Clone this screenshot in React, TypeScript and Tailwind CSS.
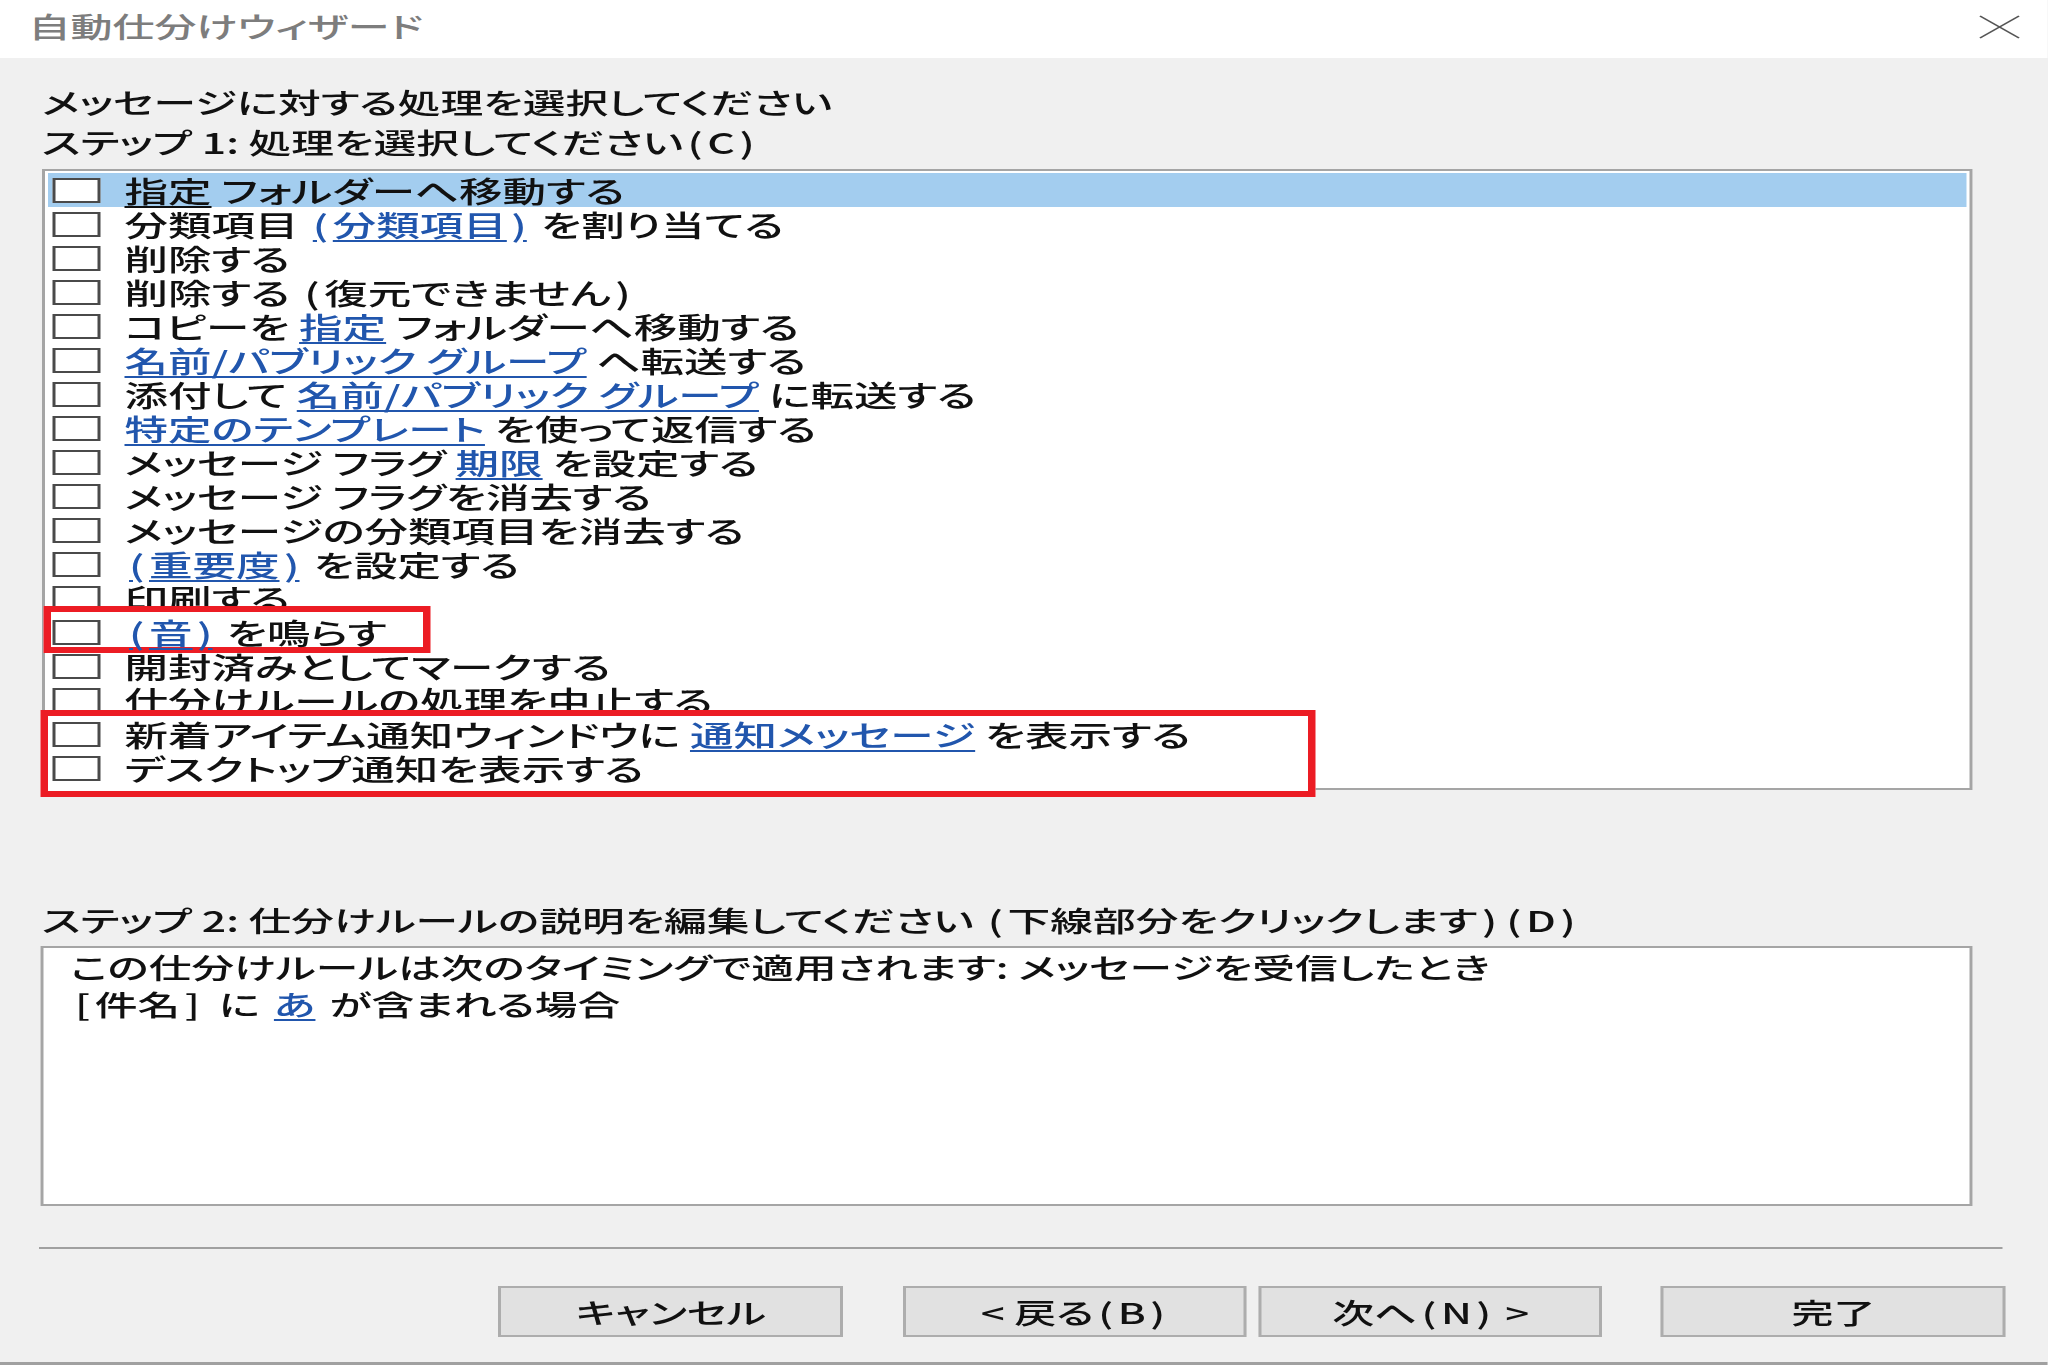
import React from "react";

type Seg = { t: string; link?: boolean };

const rows: Seg[][] = [
  [{ t: "指定", link: true }, { t: " フォルダーへ移動する" }],
  [{ t: "分類項目 " }, { t: "(分類項目)", link: true }, { t: " を割り当てる" }],
  [{ t: "削除する" }],
  [{ t: "削除する (復元できません)" }],
  [{ t: "コピーを " }, { t: "指定", link: true }, { t: " フォルダーへ移動する" }],
  [{ t: "名前/パブリック グループ", link: true }, { t: " へ転送する" }],
  [{ t: "添付して " }, { t: "名前/パブリック グループ", link: true }, { t: " に転送する" }],
  [{ t: "特定のテンプレート", link: true }, { t: " を使って返信する" }],
  [{ t: "メッセージ フラグ " }, { t: "期限", link: true }, { t: " を設定する" }],
  [{ t: "メッセージ フラグを消去する" }],
  [{ t: "メッセージの分類項目を消去する" }],
  [{ t: "(重要度)", link: true }, { t: " を設定する" }],
  [{ t: "印刷する" }],
  [{ t: "(音)", link: true }, { t: " を鳴らす" }],
  [{ t: "開封済みとしてマークする" }],
  [{ t: "仕分けルールの処理を中止する" }],
  [{ t: "新着アイテム通知ウィンドウに " }, { t: "通知メッセージ", link: true }, { t: " を表示する" }],
  [{ t: "デスクトップ通知を表示する" }],
];

// Widen the half-width brackets the way the original UI font draws them.
function W({ s }: { s: string }) {
  const parts = s.split(/([()\[\]])/);
  return (
    <>
      {parts.map((p, i) =>
        /^[()\[\]]$/.test(p) ? (
          <span key={i} className="px-[3px]">
            {p}
          </span>
        ) : (
          <React.Fragment key={i}>{p}</React.Fragment>
        )
      )}
    </>
  );
}

function Row({ segs, selected, raised }: { segs: Seg[]; selected?: boolean; raised?: boolean }) {
  return (
    <div
      className={`flex h-[34px] items-center ${selected ? "bg-[#a3cdef]" : ""} ${raised ? "relative z-10" : ""}`}
    >
      <span className="ml-[3px] h-[25px] w-[32px] shrink-0 border-2 border-[#4a4a4a] bg-white" />
      <span className="ml-[16px] whitespace-pre text-[#111111]">
        {segs.map((s, i) =>
          s.link ? (
            <span
              key={i}
              className={`underline underline-offset-[3px] ${selected ? "text-[#111111]" : "text-[#2156ad]"}`}
            >
              <W s={s.t} />
            </span>
          ) : (
            <span key={i}>
              <W s={s.t} />
            </span>
          )
        )}
      </span>
    </div>
  );
}

export default function App() {
  return (
    <div className="h-[1365px] w-[2048px] overflow-hidden bg-[#f0f0f0]">
      <div className="flex h-[1365px] w-[1365.33px] origin-top-left scale-x-150 flex-col font-['Noto_Sans_CJK_JP','Noto_Sans',sans-serif] font-medium text-[#111111] [font-feature-settings:'palt']">
        {/* Title bar */}
        <div className="flex h-[58px] shrink-0 items-center justify-between bg-white pl-[19px] pr-[18px]">
          <span className="-mt-[7px] text-[28px] leading-none text-[#7d7d7d]">自動仕分けウィザード</span>
          <svg width="28" height="24" viewBox="0 0 28 24" className="-mt-[5px]">
            <line x1="1" y1="1" x2="27" y2="23" stroke="#555555" strokeWidth="1.4" />
            <line x1="27" y1="1" x2="1" y2="23" stroke="#555555" strokeWidth="1.4" />
          </svg>
        </div>

        {/* Body */}
        <div className="flex flex-1 flex-col border-b-[3px] border-[#a0a0a0] px-[28px] pt-[24px]">
          <div className="text-[28.5px] leading-[40px]">メッセージに対する処理を選択してください</div>
          <div className="whitespace-pre text-[28.5px] leading-[40px]">
            <W s="ステップ 1: 処理を選択してください(C)" />
          </div>

          {/* Action list */}
          <div className="mt-[7px] h-[621px] w-[1287px] border-2 border-[#a5a5a5] bg-white p-[2px] text-[29px] leading-[34px]">
            {rows.slice(0, 13).map((r, i) => (
              <Row key={i} segs={r} selected={i === 0} />
            ))}
            <div className="relative">
              <div className="absolute -top-[9px] -bottom-[4px] -left-[3px] w-[258px] border-x-[5px] border-y-[6px] border-[#ec1c24] bg-white" />
              <Row segs={rows[13]} raised />
            </div>
            {rows.slice(14, 16).map((r, i) => (
              <Row key={i} segs={r} />
            ))}
            <div className="relative">
              <div className="absolute -top-[7px] -bottom-[12px] -left-[5px] w-[850px] border-x-[5px] border-y-[6px] border-[#ec1c24] bg-white" />
              <Row segs={rows[16]} raised />
              <Row segs={rows[17]} raised />
            </div>
          </div>

          <div className="mt-[110px] whitespace-pre text-[28.5px] leading-[40px]">
            <W s="ステップ 2: 仕分けルールの説明を編集してください (下線部分をクリックします)(D)" />
          </div>

          {/* Description */}
          <div className="-ml-[1px] mt-[6px] h-[260px] w-[1288px] border-2 border-[#a5a5a5] bg-white pl-[18px] text-[28.5px] leading-[37px]">
            <div>この仕分けルールは次のタイミングで適用されます: メッセージを受信したとき</div>
            <div className="whitespace-pre [word-spacing:3px]">
              <span>
                <W s="[件名] に " />
              </span>
              <span className="text-[#2156ad] underline underline-offset-[3px]">あ</span>
              <span> が含まれる場合</span>
            </div>
          </div>

          {/* Separator */}
          <div className="-ml-[2px] mt-[41px] h-[2px] w-[1309px] bg-[#a0a0a0]" />

          {/* Buttons */}
          <div className="mt-[37px] flex justify-end">
            <button className="mr-[40px] h-[51px] w-[230px] border-2 border-[#adadad] bg-[#e1e1e1] text-[28px] text-[#111111]">
              キャンセル
            </button>
            <button className="mr-[8px] h-[51px] w-[229px] whitespace-pre border-2 border-[#adadad] bg-[#e1e1e1] text-[28px] text-[#111111]">
              <W s="< 戻る(B)" />
            </button>
            <button className="mr-[39px] h-[51px] w-[229px] whitespace-pre border-2 border-[#adadad] bg-[#e1e1e1] text-[28px] text-[#111111]">
              <W s="次へ(N) >" />
            </button>
            <button className="h-[51px] w-[230px] border-2 border-[#adadad] bg-[#e1e1e1] text-[28px] text-[#111111]">
              完了
            </button>
          </div>
        </div>
      </div>
    </div>
  );
}
